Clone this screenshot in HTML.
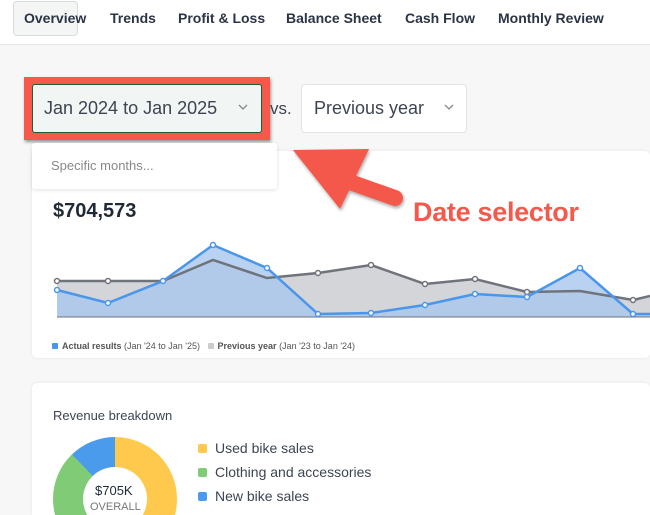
<!DOCTYPE html>
<html><head><style>
*{margin:0;padding:0;box-sizing:border-box}
html,body{width:650px;height:515px;overflow:hidden}
body{background:#f7f7f7;font-family:"Liberation Sans",sans-serif;color:#2b3445}
#w{position:relative;width:650px;height:515px;overflow:hidden}
.nav{position:absolute;left:0;top:0;width:650px;height:45px;background:#fff;border-bottom:1px solid #e6e6e6}
.nav span{position:absolute;top:10px;font-size:14px;font-weight:bold;color:#2b3445}
.ov{position:absolute;left:13px;top:1px;width:65px;height:35px;border:1px solid #d8dcdc;border-radius:4px;background:#f4f6f6}
.abs{position:absolute}
.card{position:absolute;background:#fff;border-radius:5px;box-shadow:0 0 3px rgba(0,0,0,.08)}
</style></head><body><div id="w">
<div class="nav">
<div class="ov"></div>
<span style="left:24px">Overview</span>
<span style="left:110px">Trends</span>
<span style="left:178px">Profit &amp; Loss</span>
<span style="left:286px">Balance Sheet</span>
<span style="left:405px">Cash Flow</span>
<span style="left:498px">Monthly Review</span>
</div>

<div class="card" style="left:32px;top:151px;width:618px;height:207px"></div>
<div class="abs" style="left:53px;top:200px;font-size:20px;font-weight:bold;color:#1f2937">$704,573</div>
<svg class="abs" style="left:0;top:0" width="650" height="515">
<polygon points="57,281 108,281 163,281 213,260 267,278 318,273 371,265 425,284 475,279 527,292 580,291 633,300 650,296 650,317 57,317" fill="#d3d5d9"/>
<polygon points="57,290 108,303 163,281 213,245 267,268 318,314 371,313 425,305 475,294 527,297 580,268 633,314 650,314 650,317 57,317" fill="#a9c7ee" opacity=".8"/>
<line x1="57" y1="317" x2="650" y2="317" stroke="#6b7280" stroke-width="1"/>
<polyline points="57,281 108,281 163,281 213,260 267,278 318,273 371,265 425,284 475,279 527,292 580,291 633,300 650,296" fill="none" stroke="#6f737b" stroke-width="2.5"/>
<polyline points="57,290 108,303 163,281 213,245 267,268 318,314 371,313 425,305 475,294 527,297 580,268 633,314 650,314" fill="none" stroke="#4a96ea" stroke-width="2.5"/>
<g fill="#fff" stroke="#6f737b" stroke-width="1.5">
<circle cx="57" cy="281" r="2.5"/><circle cx="108" cy="281" r="2.5"/><circle cx="318" cy="273" r="2.5"/><circle cx="371" cy="265" r="2.5"/><circle cx="425" cy="284" r="2.5"/><circle cx="475" cy="279" r="2.5"/><circle cx="527" cy="292" r="2.5"/><circle cx="633" cy="300" r="2.5"/></g>
<g fill="#fff" stroke="#4a96ea" stroke-width="1.5">
<circle cx="57" cy="290" r="2.5"/><circle cx="108" cy="303" r="2.5"/><circle cx="163" cy="281" r="2.5"/><circle cx="213" cy="245" r="2.5"/><circle cx="267" cy="268" r="2.5"/><circle cx="318" cy="314" r="2.5"/><circle cx="371" cy="313" r="2.5"/><circle cx="425" cy="305" r="2.5"/><circle cx="475" cy="294" r="2.5"/><circle cx="527" cy="297" r="2.5"/><circle cx="580" cy="268" r="2.5"/><circle cx="633" cy="314" r="2.5"/></g>
</svg>
<div class="abs" style="left:52px;top:341px;font-size:9px;color:#555;white-space:nowrap"><span style="display:inline-block;width:6px;height:6px;background:#4a96ea;border-radius:1px;margin-right:4px"></span><b>Actual results</b> (Jan '24 to Jan '25) &nbsp; <span style="display:inline-block;width:6px;height:6px;background:#ccc;border-radius:1px;margin-right:4px"></span><b>Previous year</b> (Jan '23 to Jan '24)</div>

<div class="card" style="left:32px;top:383px;width:618px;height:132px;overflow:hidden;border-radius:5px 5px 0 0">
<div class="abs" style="left:21px;top:25px;font-size:13px;color:#3d4452">Revenue breakdown</div>
<div class="abs" style="left:21px;top:54px;width:124px;height:124px;border-radius:50%;background:conic-gradient(#ffc94d 0 185deg,#80cc76 185deg 316deg,#4b9bec 316deg 360deg)"></div>
<div class="abs" style="left:51px;top:84px;width:64px;height:64px;border-radius:50%;background:#fff"></div>
<div class="abs" style="left:63px;top:100px;font-size:13px;color:#1f2937">$705K</div>
<div class="abs" style="left:58px;top:118px;font-size:11px;color:#777">OVERALL</div>
<div class="abs" style="left:166px;top:53px;font-size:14px;color:#3d4452;line-height:24px;white-space:nowrap">
<div><span style="display:inline-block;width:9px;height:9px;background:#ffc94d;border-radius:2px;margin-right:8px"></span>Used bike sales</div>
<div><span style="display:inline-block;width:9px;height:9px;background:#80cc76;border-radius:2px;margin-right:8px"></span>Clothing and accessories</div>
<div><span style="display:inline-block;width:9px;height:9px;background:#4b9bec;border-radius:2px;margin-right:8px"></span>New bike sales</div>
</div>
</div>

<div class="abs" style="left:24px;top:77px;width:246px;height:63px;background:#f4594b;box-shadow:1px 2px 3px rgba(0,0,0,.4)"></div>
<div class="abs" style="left:32px;top:84px;width:230px;height:49px;background:#f1f5f3;border:1px solid #1f5c3e;border-radius:3px"></div>
<div class="abs" style="left:44px;top:98px;font-size:18px;color:#3d4452">Jan 2024 to Jan 2025</div>
<div class="abs" style="left:270px;top:99px;font-size:17px;color:#3d4452">vs.</div>
<div class="abs" style="left:301px;top:84px;width:166px;height:49px;background:#fff;border:1px solid #e3e3e3;border-radius:4px"></div>
<div class="abs" style="left:314px;top:98px;font-size:18px;color:#3d4452">Previous year</div>
<svg class="abs" style="left:0;top:0" width="650" height="515">
<polyline points="239,105 243,109 247,105" fill="none" stroke="#888" stroke-width="1.3"/>
<polyline points="445,105 449,109 453,105" fill="none" stroke="#888" stroke-width="1.3"/>
</svg>
<div class="abs" style="left:32px;top:143px;width:245px;height:46px;background:#fff;border-radius:3px;box-shadow:0 1px 4px rgba(0,0,0,.12)"></div>
<div class="abs" style="left:51px;top:158px;font-size:13px;color:#888">Specific months...</div>

<svg class="abs" style="left:0;top:0" width="650" height="515">
<defs><filter id="s"><feDropShadow dx="1" dy="2" stdDeviation="1.5" flood-opacity=".35"/></filter></defs>
<g filter="url(#s)" fill="#f4594b">
<polygon points="293,150 369,149 340,209"/>
<line x1="330" y1="175" x2="395" y2="198" stroke="#f4594b" stroke-width="16" stroke-linecap="round"/>
</g>
</svg>
<div class="abs" style="left:413px;top:197px;font-size:27px;font-weight:bold;color:#f4594b;letter-spacing:-0.3px;white-space:nowrap">Date selector</div>
</div></body></html>
